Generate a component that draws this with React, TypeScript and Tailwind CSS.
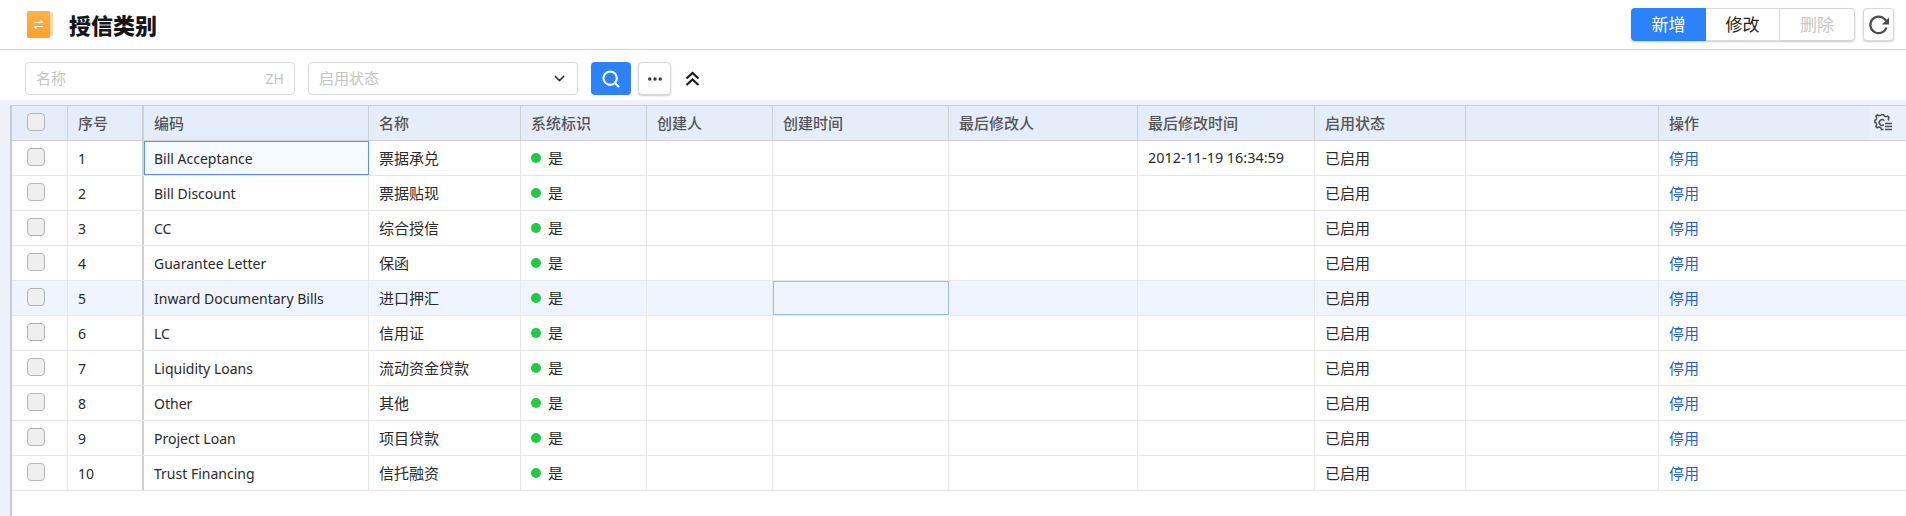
import { Search, Ellipsis, ChevronDown } from 'lucide-react';

interface Row {
  no: number;
  code: string;
  name: string;
  modified?: string;
}

const rows: Row[] = [
  { no: 1, code: 'Bill Acceptance', name: '票据承兑', modified: '2012-11-19 16:34:59' },
  { no: 2, code: 'Bill Discount', name: '票据贴现' },
  { no: 3, code: 'CC', name: '综合授信' },
  { no: 4, code: 'Guarantee Letter', name: '保函' },
  { no: 5, code: 'Inward Documentary Bills', name: '进口押汇' },
  { no: 6, code: 'LC', name: '信用证' },
  { no: 7, code: 'Liquidity Loans', name: '流动资金贷款' },
  { no: 8, code: 'Other', name: '其他' },
  { no: 9, code: 'Project Loan', name: '项目贷款' },
  { no: 10, code: 'Trust Financing', name: '信托融资' },
];

const gridCols =
  'grid grid-cols-[56px_76px_225px_152px_126px_126px_176px_189px_177px_151px_193px_1fr]';

function CheckBox() {
  return <span className="mb-[3px] mr-[7px] block h-[18px] w-[18px] rounded-[4px] border border-[#b4b4b4] bg-[#efefef]" />;
}

function HeadCell({ children, thick }: { children?: React.ReactNode; thick?: boolean }) {
  return (
    <div
      className={`flex items-center border-r border-[#cfd0d4] pl-[10px] font-medium text-[#555] ${thick ? 'border-r-[2px]' : ''}`}
    >
      {children}
    </div>
  );
}

function Cell({ children, className = '' }: { children?: React.ReactNode; className?: string }) {
  return (
    <div className={`flex items-center border-r border-[#e8e8e8] pl-[10px] text-[#2a2a2a] ${className}`}>{children}</div>
  );
}

export default function App() {
  return (
    <div className="h-[516px] w-[1906px] overflow-hidden bg-white font-['Noto_Sans','Noto_Sans_CJK_SC',sans-serif] text-[15px]">
      <header className="flex h-[50px] items-center justify-between border-b border-[#d4d4d4] pl-[27px] pr-[12px]">
        <div className="flex items-center gap-[16px]">
          <svg width="26" height="27" viewBox="0 0 26 27" aria-hidden="true">
            <defs>
              <linearGradient id="logoFill" x1="0" y1="0" x2="0" y2="1">
                <stop offset="0" stopColor="#ffb347" />
                <stop offset="1" stopColor="#ff9f2e" />
              </linearGradient>
            </defs>
            <rect x="5" y="1" width="21" height="24" rx="2" fill="#ffd9a3" />
            <rect x="0" y="0" width="23" height="27" rx="1.5" fill="url(#logoFill)" />
            <path d="M7 11.500h9M13.500 9.500l2.500 2M16 15.500H7M9.500 17.500l-2.500-2" stroke="#fff" strokeWidth="1.200" fill="none" />
          </svg>
          <h1 className="text-[22px] font-extrabold leading-none text-[#161616]">授信类别</h1>
        </div>
        <div className="flex items-center gap-[8px]">
          <div className="flex h-[33px] rounded-[4px] text-[17px] shadow-[0_1px_2px_rgba(0,0,0,0.2)]">
            <button type="button" className="w-[75px] rounded-l-[4px] bg-[#2b82fb] text-white">新增</button>
            <button type="button" className="w-[74px] border-y border-r border-[#dcdcdc] bg-white text-[#222]">修改</button>
            <button type="button" className="w-[75px] rounded-r-[4px] border-y border-r border-[#d4d4d4] bg-white text-[#c8c8c8]">删除</button>
          </div>
          <button
            type="button"
            className="flex h-[33px] w-[31px] items-center justify-center rounded-[4px] border border-[#d8d8d8] bg-white shadow-[0_1px_2px_rgba(0,0,0,0.2)]"
            aria-label="刷新"
          >
            <svg width="24" height="24" viewBox="0 0 24 24" fill="none" aria-hidden="true">
              <path d="M19.500 14.500A8.300 8.300 0 1 1 17.800 6.300L19.500 8" stroke="#4c4c4c" strokeWidth="2.200" />
              <path d="M22 4.500V11.500H15Z" fill="#4c4c4c" />
            </svg>
          </button>
        </div>
      </header>

      <div className="flex h-[50px] items-start gap-[13px] pl-[25px] pt-[12px]">
        <div className="flex h-[33px] w-[270px] items-center justify-between rounded-[4px] border border-[#d9d9d9] px-[10px] text-[#c4c4c4]">
          <span>名称</span>
          <span className="text-[14px]">ZH</span>
        </div>
        <div className="flex h-[33px] w-[270px] items-center justify-between rounded-[4px] border border-[#d9d9d9] pl-[10px] pr-[9px] text-[#c4c4c4]">
          <span>启用状态</span>
          <ChevronDown size={17} strokeWidth={2} className="text-[#333]" />
        </div>
        <div className="flex items-center">
          <button type="button" className="flex h-[33px] w-[40px] items-center justify-center rounded-[4px] bg-[#2b82fb] text-white" aria-label="搜索">
            <Search size={20} strokeWidth={2.5} />
          </button>
          <button
            type="button"
            className="ml-[7px] flex h-[33px] w-[33px] items-center justify-center rounded-[4px] border border-[#d8d8d8] bg-white text-[#333] shadow-[0_1px_2px_rgba(0,0,0,0.2)]"
            aria-label="更多"
          >
            <Ellipsis size={18} strokeWidth={2.5} />
          </button>
          <svg className="ml-[14px]" width="15" height="16" viewBox="0 0 15 16" fill="none" stroke="#1e1e1e" strokeWidth="2.300" aria-hidden="true">
            <path d="M1.500 7.500 7.500 2l6 5.500M1.500 14 7.500 8.500l6 5.500" />
          </svg>
        </div>
      </div>

      <div className="flex h-[416px] flex-col bg-[#eef1f9] pt-[5px]">
        <div className="ml-[10px] flex-1 border-l-[2px] border-[#c7cbd8] bg-white">
          <div className={`${gridCols} h-[36px] border-y border-[#cfd0d4] bg-[#e6edfa]`}>
            <div className="flex items-center justify-center border-r border-[#cfd0d4]"><CheckBox /></div>
            <HeadCell thick>序号</HeadCell>
            <HeadCell>编码</HeadCell>
            <HeadCell>名称</HeadCell>
            <HeadCell>系统标识</HeadCell>
            <HeadCell>创建人</HeadCell>
            <HeadCell>创建时间</HeadCell>
            <HeadCell>最后修改人</HeadCell>
            <HeadCell>最后修改时间</HeadCell>
            <HeadCell>启用状态</HeadCell>
            <HeadCell />
            <div className="relative flex items-center pl-[10px] font-medium text-[#555]">
              操作
              <div className="absolute inset-y-0 right-0 flex w-[37px] items-center bg-[#e9f0fb] pl-[5px]">
                <svg width="19" height="18" viewBox="0 0 19 18" fill="none" stroke="#4a4f5a" strokeWidth="1.500" aria-hidden="true">
                  <path d="M9.500 15.500H7.400l-.7-1.800-1.800-.7-1.700.8-1.300-1.500.8-1.700-.6-1.700L.8 8.300V6.300l1.300-.6.600-1.700-.8-1.700L3.400 1l1.700.8 1.700-.7L7.400.7h2.200l.7 1.400 1.800.7 1.600-.8 1.300 1.400-.7 1.700.5 1.500" />
                  <path d="M9.800 10.700a2.800 2.800 0 1 1 .4-4" />
                  <path d="M11 9.500h7M11 12.500h7M11 15.500h7" />
                </svg>
              </div>
            </div>
          </div>
          {rows.map((row) => (
            <div
              key={row.no}
              className={`${gridCols} h-[35px] border-b border-[#e8e8e8] ${row.no === 5 ? 'bg-[#eff4fe]' : ''}`}
            >
              <Cell className="justify-center !pl-0"><CheckBox /></Cell>
              <Cell className="border-r-[2px] !border-r-[#cfd0d4] text-[14px]">{row.no}</Cell>
              <Cell className={`text-[14px] ${row.no === 1 ? 'bg-[#f5faff] outline-[1.500px] -outline-offset-1 outline-[#5b93ea]' : ''}`}>{row.code}</Cell>
              <Cell>{row.name}</Cell>
              <Cell>
                <span className="mr-[7px] h-[10px] w-[10px] rounded-full bg-[#22c944]" />是
              </Cell>
              <Cell />
              <Cell className={row.no === 5 ? 'outline-[1.500px] -outline-offset-1 outline-[#9dbcee]' : ''} />
              <Cell />
              <Cell className="text-[14.400px]">{row.modified}</Cell>
              <Cell>已启用</Cell>
              <Cell />
              <div className="flex items-center pl-[10px] text-[#1f63c8]">停用</div>
            </div>
          ))}
        </div>
      </div>
    </div>
  );
}
